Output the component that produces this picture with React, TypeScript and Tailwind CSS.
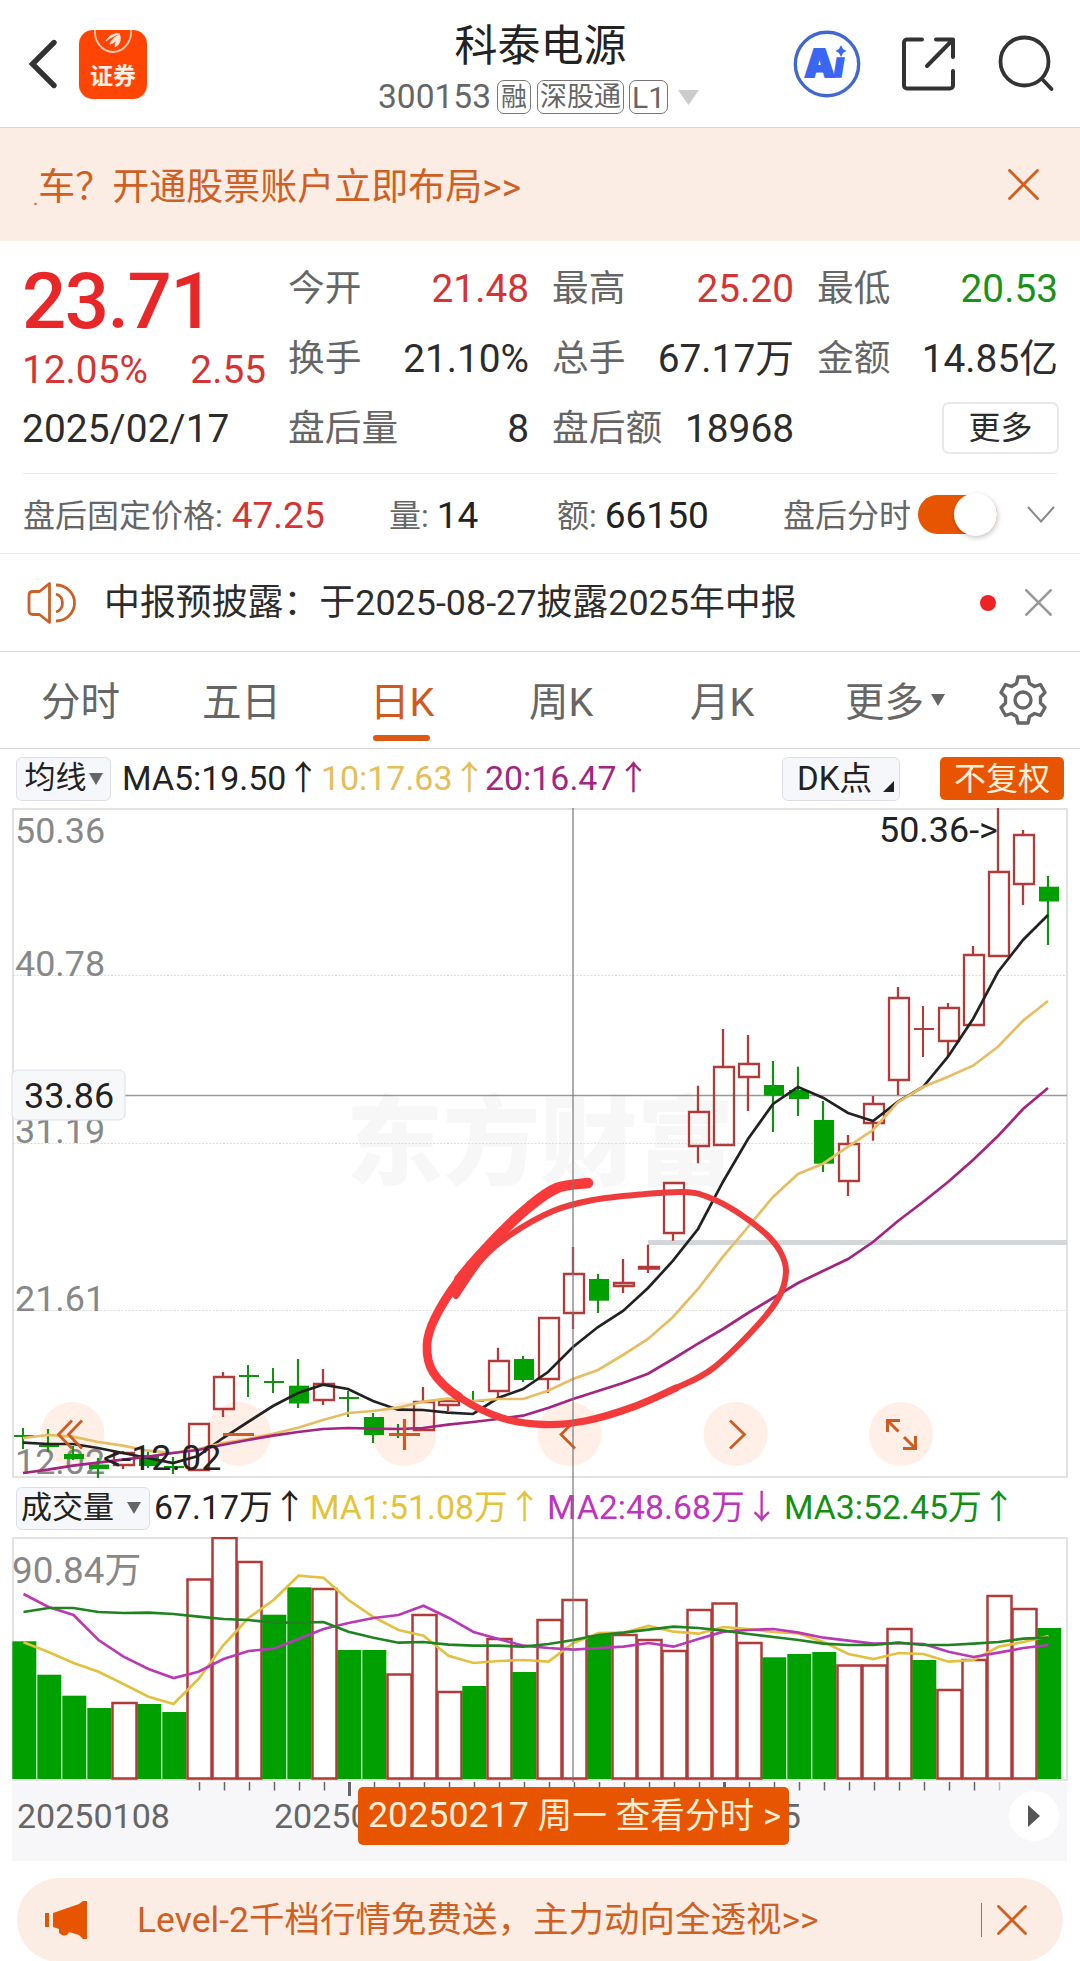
import React from "react";

type Candle = [up: number, high: number, top: number, bottom: number, low: number];

// [1 = red / 0 = green, high, body top, body bottom, low]
const candles: Candle[] = [
  [0, 1428, 1436, 1436, 1449], [0, 1429, 1445, 1447, 1452], [0, 1446, 1454, 1459, 1460],
  [0, 1458, 1464.5, 1469, 1478], [1, 1451, 1453, 1465, 1469], [0, 1451, 1455, 1466, 1468],
  [0, 1457, 1466, 1468, 1474], [1, 1424, 1424, 1470, 1471], [1, 1372, 1377, 1409, 1417],
  [0, 1365, 1376, 1376, 1397], [0, 1368, 1382, 1382, 1393], [0, 1359, 1385.7, 1403.5, 1408],
  [1, 1369, 1384, 1400, 1405], [0, 1391, 1398, 1398, 1417], [0, 1413, 1417, 1435, 1443],
  [0, 1424, 1428, 1430, 1438], [1, 1387, 1402, 1430, 1430], [1, 1400, 1401, 1405, 1411],
  [0, 1391, 1401, 1401, 1405], [1, 1347.7, 1361, 1391, 1398], [0, 1356, 1359, 1380, 1382],
  [1, 1318, 1318, 1379, 1393], [1, 1247, 1274, 1313, 1329], [0, 1274, 1279, 1300.7, 1313],
  [1, 1259, 1283, 1286, 1293], [1, 1244.7, 1267, 1268.5, 1273], [1, 1183, 1183, 1233, 1240.7],
  [1, 1085.7, 1112, 1146, 1163.3], [1, 1029, 1067, 1145, 1145], [1, 1035, 1064, 1077, 1111],
  [0, 1061, 1085, 1095.7, 1132], [0, 1066.7, 1090, 1099, 1116], [0, 1101, 1120, 1163.7, 1172],
  [1, 1135, 1144, 1181, 1196], [1, 1096, 1104, 1123, 1140.7], [1, 987, 998, 1080, 1095],
  [1, 1006, 1029, 1029, 1057], [1, 1003, 1008, 1041, 1056], [1, 946, 955, 1025, 1025],
  [1, 808, 872, 956, 956], [1, 830, 835, 884, 905], [0, 876, 886.7, 901.5, 945],
];

const ma5 = [1442.7, 1444, 1444, 1448, 1453, 1458, 1463, 1456, 1438, 1422, 1406, 1393, 1384.7, 1389, 1401, 1409.7, 1410, 1412.7, 1414, 1398, 1389, 1372, 1347, 1327, 1311, 1288, 1260.7, 1229, 1181.7, 1139, 1104, 1087, 1097.7, 1113, 1121, 1101.7, 1087, 1056.7, 1019, 972, 940, 915];
const ma10 = [1438, 1435, 1436.7, 1442, 1445.7, 1450.7, 1453, 1449, 1443, 1439, 1433.7, 1427.7, 1420, 1413, 1411, 1407.7, 1401.7, 1398.7, 1401, 1399, 1399, 1390.7, 1379, 1370, 1355, 1339, 1317, 1289, 1256.7, 1227, 1197, 1174, 1163.7, 1146.7, 1130, 1102, 1087, 1076.7, 1065.7, 1046.7, 1020.7, 1001];
const ma20 = [1473, 1469.7, 1465.7, 1462.7, 1459.7, 1456.7, 1453, 1450, 1444.7, 1440, 1435.7, 1432, 1429, 1428, 1428.7, 1429, 1428, 1424.7, 1422, 1419, 1415.7, 1408, 1399, 1391, 1383, 1373.7, 1359, 1343.7, 1329, 1313, 1298, 1283, 1271, 1259, 1242, 1221, 1202, 1182, 1160, 1136, 1109, 1088];

// top edge of every volume bar, same order as the candles
const volumeTops = [1641.3, 1674.7, 1695.7, 1708, 1703, 1704, 1712, 1579.5, 1538, 1562, 1614.7, 1587.3, 1589, 1650, 1650, 1674.5, 1615, 1692, 1686, 1639, 1672, 1620, 1600, 1635, 1635, 1640, 1651, 1610, 1603.5, 1643, 1657.3, 1654, 1652, 1665.5, 1665.5, 1629, 1660, 1690, 1660, 1596, 1609, 1628];
const volumeRed = [4, 7, 8, 9, 12, 15, 16, 17, 19, 21, 22, 24, 25, 26, 27, 28, 29, 33, 34, 35, 37, 38, 39, 40];
const vma1 = [1642.3, 1652, 1663, 1671.7, 1684, 1696.7, 1704, 1679, 1645, 1618, 1600, 1575.7, 1577.7, 1600, 1617, 1630, 1635.7, 1655.7, 1663, 1661, 1660, 1661.7, 1643, 1633, 1632.7, 1626, 1631.7, 1633.7, 1627, 1629, 1632, 1633.5, 1642, 1654, 1659, 1653, 1654, 1661.7, 1660, 1646.7, 1642, 1636];
const vma2 = [1594, 1607, 1615, 1640, 1656.7, 1669, 1678, 1671.7, 1659, 1651, 1648.7, 1639, 1629, 1623, 1618, 1615, 1605.7, 1617.7, 1632, 1639, 1645.7, 1648, 1649.7, 1648, 1646.7, 1643, 1646.7, 1639, 1631.7, 1630, 1629, 1632.7, 1637.7, 1640.7, 1643.7, 1643, 1644, 1651.7, 1657, 1652.7, 1648, 1645];
const vma3 = [1612, 1608, 1608, 1612, 1613, 1612.7, 1614, 1616.7, 1619, 1620, 1622.7, 1622.7, 1622, 1631.7, 1637.7, 1642.7, 1642, 1644.7, 1645.7, 1645.7, 1646.7, 1644, 1640, 1635, 1632.7, 1629.7, 1626.7, 1628, 1630.7, 1634, 1637, 1640, 1643.7, 1645, 1645, 1642.7, 1645, 1645, 1643.7, 1642, 1638.7, 1637.7];

const line = (values: number[], start: number) =>
  values.map((y, i) => `${start + i * 25},${y}`).join(" ");

// hand drawn loop around the breakout
const loop = [
  [588, 1183], [557, 1188], [530, 1206], [498, 1236], [459, 1280], [435, 1318], [427, 1345],
  [433, 1372], [459, 1397], [502, 1418], [543, 1424.5], [585, 1421], [633, 1407], [676, 1388],
  [712, 1369], [755, 1328], [779, 1297], [786, 1272], [781, 1253], [767, 1235], [737, 1212],
  [708, 1197], [684, 1192], [640, 1194.5], [593, 1200], [553, 1211], [510, 1235], [482, 1259],
  [456, 1296],
];

function smooth(p: number[][], from: number, to: number) {
  let d = `M${p[from][0]} ${p[from][1]}`;
  for (let i = from; i < to; i++) {
    const a = p[i - 1] ?? p[i];
    const b = p[i];
    const c = p[i + 1];
    const e = p[i + 2] ?? c;
    d += `C${b[0] + (c[0] - a[0]) / 6} ${b[1] + (c[1] - a[1]) / 6} ${c[0] - (e[0] - b[0]) / 6} ${c[1] - (e[1] - b[1]) / 6} ${c[0]} ${c[1]}`;
  }
  return d;
}

function Cross({ className, width }: { className: string; width: number }) {
  return (
    <svg viewBox="0 0 30 30" className={className} fill="none" stroke="currentColor" strokeWidth={width} strokeLinecap="round">
      <path d="M1.500 1.500 28.500 28.500M28.500 1.500 1.500 28.500" />
    </svg>
  );
}

function Header() {
  return (
    <header className="flex h-32 items-start border-b border-[#d3dad3] bg-white pl-[28px]">
      <svg className="mt-[38px] h-[52px] w-[32px] shrink-0" viewBox="0 0 32 52" fill="none" stroke="#333" strokeWidth="5.4" strokeLinecap="round">
        <path d="M26 4.500 4.500 26 26 47.500" />
      </svg>
      <svg className="ml-[19px] mt-[30px] h-[69px] w-[68px] shrink-0" viewBox="0 0 68 69">
        <rect width="68" height="69" rx="14" fill="#ff4503" />
        <path d="M16 0C15 11 23 22 34 22S53 11 52 0" fill="none" stroke="#ffc9b0" strokeWidth="1.800" />
        <path d="M27 11C30 5 36 3 41 4 36 5 31 8 27 11ZM31 14C33 9 37 6 41 5 39 9 36 13 31 14ZM36 17C36 13 38 9 41 6 42 11 40 15 36 17Z" fill="#ffeadf" stroke="#ffeadf" strokeWidth="0.800" />
        <text x="34" y="54" textAnchor="middle" fill="#fff0e8" className="font-['Noto_Sans_CJK_SC',sans-serif] text-[23px] font-bold">证券</text>
      </svg>
      <div className="ml-[231px] flex w-[325px] flex-col items-center">
        <h1 className="mt-[22px] text-[43px] leading-[48px] text-[#222]">科泰电源</h1>
        <div className="mt-[8px] flex h-[38px] w-full items-center text-[#666]">
          <span className="w-[119px] text-[33.500px] leading-[38px]">300153</span>
          <span className="flex h-[34px] w-[34px] items-center justify-center rounded-[7px] border border-[#777] text-[26px]">融</span>
          <span className="ml-[6px] flex h-[34px] w-[87px] items-center justify-center rounded-[7px] border border-[#777] text-[27px]">深股通</span>
          <span className="ml-[5px] flex h-[34px] w-[39px] items-center justify-center rounded-[7px] border border-[#777] text-[30px]">L1</span>
          <svg className="ml-[10px] h-[15px] w-[21px]" viewBox="0 0 21 15" fill="#ccc"><path d="M0 0H21L10.500 15Z" /></svg>
        </div>
      </div>
      <svg className="ml-[90px] mt-[30px] h-[68px] w-[68px] shrink-0" viewBox="0 0 68 68">
        <circle cx="34" cy="34" r="31.700" fill="none" stroke="#4268cf" strokeWidth="3.400" />
        <text x="11.500" y="46.500" fill="#3a66f2" stroke="#3a66f2" strokeWidth="2" className="font-[Inter] text-[38px] font-black">A</text>
        <text x="41" y="47" fill="#3a66f2" stroke="#3a66f2" strokeWidth="1.500" className="font-[Inter] text-[34px] font-black italic">ı</text>
        <path d="M48 15 50 19 53.500 21 50 23 48 27 46 23 42.500 21 46 19Z" fill="#3a66f2" />
      </svg>
      <svg className="ml-[40px] mt-[36px] h-[56px] w-[56px] shrink-0" viewBox="0 0 56 56" fill="none" stroke="#333" strokeWidth="4" strokeLinecap="round" strokeLinejoin="round">
        <path d="M21 3.500H6a3 3 0 0 0-3 3V49.500a3 3 0 0 0 3 3H49a3 3 0 0 0 3-3V35M35 3.500H52V21M52 3.500 26 30" />
      </svg>
      <svg className="ml-[40px] mt-[35px] h-[58px] w-[58px] shrink-0" viewBox="0 0 58 58" fill="none" stroke="#333" strokeWidth="3.800" strokeLinecap="round">
        <circle cx="27.500" cy="26.500" r="24" />
        <path d="M45 44 54.500 54" />
      </svg>
    </header>
  );
}

interface QuoteItemProps {
  label: string
  value: string
  color?: string
}

function QuoteItem({ label, value, color = "text-[#2c2c2c]" }: QuoteItemProps) {
  return (
    <div className="flex h-[70px] items-center justify-between">
      <span className="text-[36.700px] text-[#666]">{label}</span>
      <span className={`text-[38.800px] ${color}`}>{value}</span>
    </div>
  );
}

function Quote() {
  return (
    <section className="flex h-[232px] pl-[23px] pr-[22px] pt-[13px]">
      <div className="w-[265px]">
        <div className="ml-[-1px] mt-[10px] h-[74px] text-[78px] font-medium leading-[76px] tracking-[-1.600px] text-[#e82828]">23.71</div>
        <div className="mt-[11px] flex w-[243px] justify-between text-[38.800px] leading-[42px] text-[#d53434]">
          <span className="ml-[-1px]">12.05%</span>
          <span>2.55</span>
        </div>
        <div className="ml-[-1px] mt-[17px] text-[38.800px] leading-[42px] tracking-[0.100px] text-[#2c2c2c]">2025/02/17</div>
      </div>
      <div className="w-[241px]">
        <QuoteItem label="今开" value="21.48" color="text-[#d53434]" />
        <QuoteItem label="换手" value="21.10%" />
        <QuoteItem label="盘后量" value="8" />
      </div>
      <div className="ml-[23px] w-[242px]">
        <QuoteItem label="最高" value="25.20" color="text-[#d53434]" />
        <QuoteItem label="总手" value="67.17万" />
        <QuoteItem label="盘后额" value="18968" />
      </div>
      <div className="ml-[23px] w-[241px]">
        <QuoteItem label="最低" value="20.53" color="text-[#1a921a]" />
        <QuoteItem label="金额" value="14.85亿" />
        <div className="ml-auto mr-[-1px] mt-[8px] flex h-[52px] w-[117px] items-center justify-center rounded-[7px] border-2 border-[#e6e8ec] text-[32px] text-[#2c2c2c]">更多</div>
      </div>
    </section>
  );
}

function AfterHours() {
  return (
    <section className="mx-[23px] flex h-20 items-center border-t border-[#e9e9e9] pt-[5px] text-[37px] text-[#222]">
      <div className="flex w-[366px] items-center"><span className="text-[32px] text-[#666]">盘后固定价格:</span><span className="ml-[9px] text-[#d53434]">47.25</span></div>
      <div className="flex w-[168px] items-center"><span className="text-[32px] text-[#666]">量:</span><span className="ml-[8px]">14</span></div>
      <div className="flex w-[226px] items-center"><span className="text-[32px] text-[#666]">额:</span><span className="ml-[8px]">66150</span></div>
      <span className="text-[32px] text-[#666]">盘后分时</span>
      <div className="mb-[4px] ml-[7px] flex h-[39px] w-[79px] items-center justify-end rounded-full bg-[#e85500]">
        <div className="h-[43px] w-[43px] shrink-0 rounded-full bg-white shadow-[1px_2px_5px_rgba(0,0,0,0.22)]"></div>
      </div>
      <svg className="mb-[3px] ml-[29px] h-[18px] w-[30px]" viewBox="0 0 30 18" fill="none" stroke="#888" strokeWidth="2"><path d="M2 1 15 15.500 28 1" /></svg>
    </section>
  );
}

function News() {
  return (
    <section className="flex h-[99px] items-center border-b border-t border-[#dcdcdc] border-t-[#ececec] pl-[26px] text-[#2c2c2c]">
      <svg className="h-[44px] w-[51px]" viewBox="0 0 51 44" fill="none" stroke="#cc6028" strokeWidth="2.800" strokeLinejoin="round">
        <path d="M23.500 2.500V41.500L13.500 33.500H7Q3 33.500 3 29.500V14.500Q3 10.500 7 10.500H13.500ZM30 4A18.500 18 0 0 1 30 40M30 13A9.500 9.500 0 0 1 30 31" />
      </svg>
      <span className="ml-[27px] pt-[2px] text-[35.900px]">中报预披露：于2025-08-27披露2025年中报</span>
      <div className="ml-auto h-4 w-4 rounded-full bg-[#ee2222]"></div>
      <Cross className="ml-[29px] mr-[28px] h-[27px] w-[27px] text-[#999]" width={3} />
    </section>
  );
}

function Tabs() {
  return (
    <nav className="flex h-[97px] items-center border-b border-[#d6d6d6] text-[39.500px] text-[#666]">
      <span className="ml-[41px] w-[161px] pt-[6px]">分时</span>
      <span className="w-[168px] pt-[6px]">五日</span>
      <span className="relative w-[159px] pt-[6px] text-[#d05a1e]">
        日K
        <span className="absolute bottom-[-8px] left-[3px] h-[6px] w-[57px] rounded-full bg-[#dc5a12]"></span>
      </span>
      <span className="w-[161px] pt-[6px]">周K</span>
      <span className="w-[155px] pt-[6px]">月K</span>
      <span className="pt-[6px]">更多</span>
      <svg className="ml-[7px] h-[12px] w-[14px]" viewBox="0 0 14 12" fill="#666"><path d="M0 0H14L7 12Z" /></svg>
      <svg className="ml-[54px] h-[50px] w-[48px]" viewBox="-24 -25 48 50" fill="none" stroke="#666" strokeWidth="3.400" strokeLinejoin="round">
        <path d="M-5-23H5L6.500-16.500 11.500-13.500 17.500-15.500 22-7.500 17.500-3V3L22 7.500 17.500 15.500 11.500 13.500 6.500 16.500 5 23H-5L-6.500 16.500-11.500 13.500-17.500 15.500-22 7.500-17.500 3V-3L-22-7.500-17.500-15.500-11.500-13.500-6.500-16.500Z" />
        <circle r="8" />
      </svg>
    </nav>
  );
}

function AverageBar() {
  return (
    <div className="flex h-[59px] items-center pl-4 text-[33.900px] text-[#222]">
      <div className="flex h-[44px] w-[95px] items-center justify-center gap-[2px] rounded-[6px] border border-[#dcdfe5] bg-[#f6f7fa] text-[31px]">
        均线
        <svg className="h-[12px] w-[14px]" viewBox="0 0 14 12" fill="#666"><path d="M0 0H14L7 12Z" /></svg>
      </div>
      <span className="ml-[11px] w-[199px] pt-px">MA5:19.50↑</span>
      <span className="w-[164px] pt-px text-[#e6bd58]">10:17.63↑</span>
      <span className="w-[297px] pt-px text-[#a3257f]">20:16.47↑</span>
      <div className="flex h-[44px] w-[118px] items-center rounded-[6px] border border-[#dcdfe5] bg-[#f6f7fa] pl-[14px] text-[33px]">
        DK点
        <svg className="ml-[11px] mt-[16px] h-[11px] w-[11px]" viewBox="0 0 11 11" fill="#222"><path d="M11 0V11H0Z" /></svg>
      </div>
      <div className="ml-[40px] flex h-[43px] w-[124px] items-center justify-center rounded-[5px] bg-[#e85500] text-[32px] text-[#fff0dc]">不复权</div>
    </div>
  );
}

function PriceChart() {
  return (
    <svg className="block h-[671px] w-full" viewBox="0 808 1080 671">
      <text x="346" y="1177" fill="#f7f7f7" className="font-['Noto_Sans_CJK_SC',sans-serif] text-[97px] font-black">东方财富</text>
      <path d="M13 809H1067V1477H13Z" fill="none" stroke="#e2e2e2" strokeWidth="2" />
      <path d="M13 975.500H1067M13 1143.500H1067M13 1310.500H1067" stroke="#ddd" strokeWidth="1" strokeDasharray="2 1.500" />
      <path d="M648 1242.500H1067" stroke="#d3d6da" strokeWidth="5" />
      <path d="M125 1095.500H1067" stroke="#999" strokeWidth="1.500" />
      <g fill="#ffe1d2" fillOpacity="0.55">
        <circle cx="72.500" cy="1434" r="32" />
        <circle cx="239" cy="1434" r="32" />
        <circle cx="404.500" cy="1434" r="32" />
        <circle cx="569.500" cy="1434" r="32" />
        <circle cx="735.500" cy="1434" r="32" />
        <circle cx="901" cy="1434" r="32" />
      </g>
      <g fill="#888" className="text-[35.900px]">
        <text x="15" y="843">50.36</text>
        <text x="15" y="976">40.78</text>
        <text x="15" y="1143">31.19</text>
        <text x="15" y="1311">21.61</text>
        <text x="15" y="1474">12.02</text>
      </g>
      {candles.map(([up, high, top, bottom, low], i) => {
        const x = 23 + i * 25;
        if (bottom === top) {
          return <path key={i} d={`M${x} ${high}V${low}M${x - 9} ${top}H${x + 11}`} stroke={up ? "#b53a38" : "#119011"} strokeWidth="2" />;
        }
        return up ? (
          <path key={i} d={`M${x} ${high}V${top}M${x} ${bottom}V${low}M${x - 9} ${top}H${x + 11}V${bottom}H${x - 9}Z`} fill="none" stroke="#b23a38" strokeWidth="2.300" />
        ) : (
          <g key={i} fill="#00a000">
            <path d={`M${x} ${high}V${low}`} stroke="#119011" strokeWidth="2.200" />
            <rect x={x - 9} y={top} width="20" height={bottom - top} />
          </g>
        );
      })}
      <g fill="none" strokeWidth="2.700">
        <polyline points={line(ma5, 23)} stroke="#222" />
        <polyline points={line(ma10, 23)} stroke="#e6bd62" />
        <polyline points={line(ma20, 23)} stroke="#a3257f" />
      </g>
      <g fill="none" stroke="#cc5c20" strokeWidth="2.800">
        <path d="M72 1420.500 58.500 1434.500 72 1448.500M82 1420.500 68.500 1434.500 82 1448.500" />
        <path d="M223 1434.500H254M389 1434.500H420M404.500 1419V1450" strokeWidth="3.200" />
        <path d="M575 1420.500 561 1434.500 575 1448.500M730 1420.500 744.500 1434.500 730 1448.500" />
        <path d="M887.500 1432V1420.500H900M887.500 1420.500 898.500 1431.500M915.500 1436V1448.500H903M915.500 1448.500 904 1437" strokeWidth="3" />
      </g>
      <g fill="#222" className="text-[35.900px]">
        <text x="879" y="842">50.36-&gt;</text>
        <text x="103" y="1470">&lt;-12.02</text>
      </g>
      <rect x="12" y="1070" width="113" height="50" rx="6" fill="#f7f8fa" stroke="#dcdfe5" />
      <text x="24" y="1108" fill="#222" className="text-[35.900px]">33.86</text>
      <g fill="none" stroke="#fa3a3a" strokeLinecap="round">
        <path d={smooth(loop, 0, 4)} strokeWidth="10.500" />
        <path d={smooth(loop, 4, 8)} strokeWidth="8.800" />
        <path d={smooth(loop, 8, 13)} strokeWidth="7.300" stroke="#f43b3b" />
        <path d={smooth(loop, 13, 28)} strokeWidth="6" stroke="#ee3c3c" />
      </g>
    </svg>
  );
}

function VolumeBar() {
  return (
    <div className="flex h-[58px] items-center pl-4 text-[33.800px] text-[#222]">
      <div className="flex h-[43px] w-[134px] items-center rounded-[6px] border border-[#dcdfe5] bg-[#f6f7fa] pl-[4px] text-[31px]">
        成交量
        <svg className="ml-[13px] h-[12px] w-[14px]" viewBox="0 0 14 12" fill="#666"><path d="M0 0H14L7 12Z" /></svg>
      </div>
      <span className="ml-[4px] w-[156px] pt-px">67.17万↑</span>
      <span className="w-[237px] pt-px text-[#e6c238]">MA1:51.08万↑</span>
      <span className="w-[237px] pt-px text-[#be34be]">MA2:48.68万↓</span>
      <span className="pt-px text-[#148f14]">MA3:52.45万↑</span>
    </div>
  );
}

function VolumeChart() {
  return (
    <svg className="block h-[245px] w-full" viewBox="0 1537 1080 245">
      <path d="M13 1538H1067V1780H13Z" fill="none" stroke="#e2e2e2" strokeWidth="2" />
      <text x="12" y="1583" fill="#888" className="text-[36.800px]">90.84万</text>
      {volumeTops.map((top, i) =>
        volumeRed.includes(i) ? (
          <path key={i} d={`M${12.5 + i * 25} ${top}h24V1778.500h-24Z`} fill="#fff" stroke="#b23a38" strokeWidth="2.500" />
        ) : (
          <rect key={i} x={12.300 + i * 25} y={top} width="24" height={1779 - top} fill="#00a000" />
        )
      )}
      <g fill="none" strokeWidth="2.700">
        <polyline points={line(vma1, 23.5)} stroke="#e4c040" />
        <polyline points={line(vma2, 23.5)} stroke="#b83ab4" />
        <polyline points={line(vma3, 23.5)} stroke="#1f8420" />
      </g>
    </svg>
  );
}

function DateAxis() {
  return (
    <div className="relative ml-3 mr-[13px] h-[79px] bg-[#f7f7fa]">
      <svg className="block h-[15px] w-full" viewBox="12 1782 1055 15" stroke="#666" strokeWidth="1.500">
        {candles.map((_, i) =>
          i > 6 && i < 40 ? <path key={i} d={`M${24.5 + i * 25} 1782v8.500`} strokeOpacity={i === 39 ? 0.4 : 1} /> : null
        )}
        <path d="M349.500 1782V1796M724.500 1782V1796" strokeWidth="3" />
      </svg>
      <div className="flex text-[34px] leading-[38px] text-[#666]">
        <span className="ml-[5px] w-[257px]">20250108</span>
        <span className="w-[374px]">20250127</span>
        <span>20250225</span>
      </div>
      <div className="absolute left-[346px] top-[5px] flex h-[58px] w-[431px] items-center whitespace-pre rounded-[5px] bg-[#e85500] pl-[10px] text-[34.700px] text-[#ffefd8]">
        <span className="text-[35.800px]">20250217</span> 周一 查看分时 &gt;
      </div>
      <div className="absolute right-[8px] top-[9px] flex h-[50px] w-[50px] items-center justify-center rounded-full bg-white">
        <svg className="h-[22px] w-[12px]" viewBox="0 0 12 22" fill="#555"><path d="M0 0 12 11 0 22Z" /></svg>
      </div>
    </div>
  );
}

export default function App() {
  return (
    <div className="h-[1961px] w-[1080px] overflow-hidden bg-white font-[Roboto,'Noto_Sans_CJK_SC',sans-serif]">
      <Header />
      <div className="flex h-[113px] items-center bg-[#fcede4] pl-[33px] pr-[41px] text-[37px] text-[#cf6024]">
        <span className="pt-[26px] text-[20px] leading-none">.</span>
        <span className="pt-[7px]">车？开通股票账户立即布局&gt;&gt;</span>
        <Cross className="ml-auto h-[31px] w-[31px] text-[#d45e1e]" width={2.8} />
      </div>
      <Quote />
      <AfterHours />
      <News />
      <Tabs />
      <section className="relative">
        <AverageBar />
        <PriceChart />
        <VolumeBar />
        <VolumeChart />
        <div className="absolute left-[572px] top-[59px] h-[977px] w-[2px] bg-[#777]/60"></div>
      </section>
      <DateAxis />
      <div className="ml-[17px] mt-[17px] flex h-[84px] w-[1046px] items-center rounded-full bg-[#fcede4] pl-[28px] pr-[36px] text-[35.500px] text-[#cf6024]">
        <svg className="h-[38px] w-[42px]" viewBox="0 0 42 38" fill="#e85500">
          <path d="M0 12H4V26H0ZM8 12 34 3 38 0H42V38H38L34 34 24 31Q22 36 17 34L14 32V28L8 26Z" />
        </svg>
        <span className="ml-[50px] pt-[2px]">Level-2千档行情免费送，主力动向全透视&gt;&gt;</span>
        <div className="ml-auto h-[34px] w-px bg-[#c9622a]"></div>
        <Cross className="ml-[15px] h-[30px] w-[30px] text-[#d45e1e]" width={2.8} />
      </div>
    </div>
  );
}
